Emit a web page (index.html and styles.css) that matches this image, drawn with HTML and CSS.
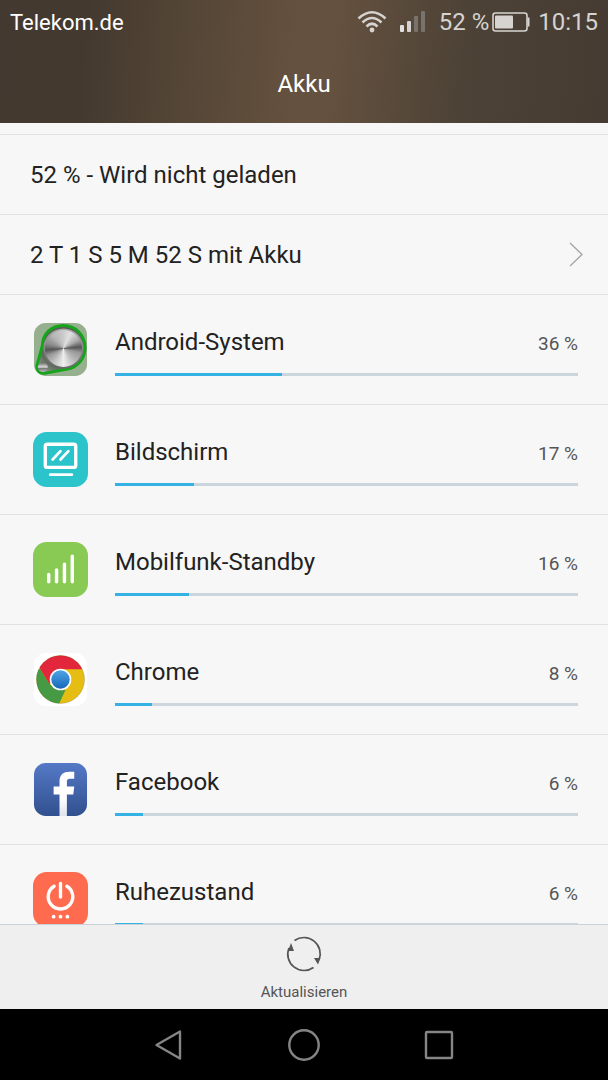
FILE: index.html
```html
<!DOCTYPE html>
<html lang="de">
<head>
  <meta charset="UTF-8">
  <meta name="viewport" content="width=device-width, initial-scale=1">
  <title>Akku</title>
  <link rel="stylesheet" href="styles.css">
</head>
<body>
  <header class="header">
    <div class="status-bar">
      <span class="carrier">Telekom.de</span>
      <svg class="wifi" width="30" height="24" viewBox="0 0 30 24" aria-hidden="true">
        <g fill="none" stroke="#d6d3d0" stroke-width="2.6">
          <path d="M1.5 8.5Q15-4 28.5 8.5"/>
          <path d="M5.5 12.5Q15 3.5 24.5 12.5"/>
          <path d="M9.5 16.5Q15 11 20.5 16.5"/>
        </g>
        <circle cx="15" cy="20" r="2.4" fill="#d6d3d0"/>
      </svg>
      <svg class="signal" width="25" height="22" viewBox="0 0 25 22" aria-hidden="true">
        <rect x="0" y="14" width="4" height="7" rx="1" fill="#e2e0de"/>
        <rect x="7" y="10" width="4" height="11" rx="1" fill="#d6d3d0"/>
        <rect x="14" y="5" width="4" height="16" rx="1" fill="#77736d"/>
        <rect x="21" y="0" width="4" height="21" rx="1" fill="#77736d"/>
      </svg>
      <span class="status-text">52 %</span>
      <svg class="battery" width="38" height="20" viewBox="0 0 38 20" aria-hidden="true">
        <rect x="1" y="1" width="34" height="18" rx="2.5" fill="none" stroke="#d6d3d0" stroke-width="1.6"/>
        <rect x="3" y="3.500" width="18" height="13" rx="1" fill="#d6d3d0"/>
        <path d="M36.5 5.500v9" stroke="#d6d3d0" stroke-width="2"/>
      </svg>
      <time class="status-text">10:15</time>
    </div>
    <h1 class="title">Akku</h1>
  </header>

  <main class="content">
    <div class="info-row">52 % - Wird nicht geladen</div>
    <a class="info-row" href="#verlauf">
      2 T 1 S 5 M 52 S mit Akku
      <svg width="14" height="26" viewBox="0 0 14 26" aria-hidden="true">
        <path d="M1 1l12 11.500-12 11.500" fill="none" stroke="#a3a3a3" stroke-width="1.3"/>
      </svg>
    </a>

    <!-- Verbrauch pro App -->
    <ul class="app-list">
      <li class="app">
        <span class="icon">
          <svg viewBox="0 0 56 56" aria-hidden="true">
            <defs>
              <radialGradient id="shade" cx="0.55" cy="0.45" r="0.6">
                <stop offset="0.6" stop-color="#4e544c"/>
                <stop offset="1" stop-color="#7d8f79"/>
              </radialGradient>
              <linearGradient id="rim" x1="0" y1="0" x2="0" y2="1">
                <stop offset="0" stop-color="#a8a8a8"/>
                <stop offset="1" stop-color="#666"/>
              </linearGradient>
              <linearGradient id="ball" x1="0" y1="0" x2="0" y2="1">
                <stop offset="0" stop-color="#666"/>
                <stop offset="0.5" stop-color="#ddd"/>
                <stop offset="0.6" stop-color="#777"/>
                <stop offset="1" stop-color="#bbb"/>
              </linearGradient>
            </defs>
            <rect x="1" y="1" width="54" height="54" rx="12" fill="#96b08f"/>
            <path d="M31 3.500C18 3.500 10 12 9.500 24L4 44C3 50 8 53 13 52L35 48C46 46 53 37 53 26C53 13 43 3.500 31 3.500Z" fill="url(#shade)" stroke="#15a51b" stroke-width="3"/>
            <circle cx="31" cy="27" r="20.5" fill="url(#rim)"/>
            <circle cx="10" cy="46" r="5" fill="url(#ball)"/>
          </svg>
          <span class="knob"></span>
        </span>
        <label class="app-name" for="app1">Android-System</label>
        <span class="percent">36 %</span>
        <progress id="app1" value="36" max="100"></progress>
      </li>
      <li class="app">
        <span class="icon">
          <svg viewBox="0 0 56 56" aria-hidden="true">
            <rect width="56" height="56" rx="14" fill="#2bc4cb"/>
            <rect x="12.5" y="12.5" width="31" height="23.5" rx="2" fill="none" stroke="#fff" stroke-width="3.4"/>
            <path d="M20 28l8-8.500M28 28l8-8.500M17.500 43.500h22" stroke="#fff" stroke-width="2.8" stroke-linecap="round"/>
          </svg>
        </span>
        <label class="app-name" for="app2">Bildschirm</label>
        <span class="percent">17 %</span>
        <progress id="app2" value="17" max="100"></progress>
      </li>
      <li class="app">
        <span class="icon">
          <svg viewBox="0 0 56 56" aria-hidden="true">
            <rect width="56" height="56" rx="14" fill="#89ca55"/>
            <path d="M16 33v7.500M24 28.500v12M32 22.500v18M40 14.500v26" stroke="#fff" stroke-width="3.5" stroke-linecap="round"/>
          </svg>
        </span>
        <label class="app-name" for="app3">Mobilfunk-Standby</label>
        <span class="percent">16 %</span>
        <progress id="app3" value="16" max="100"></progress>
      </li>
      <li class="app">
        <span class="icon">
          <svg viewBox="0 0 56 56" aria-hidden="true">
            <defs>
              <clipPath id="disc"><circle cx="28" cy="28" r="24.5"/></clipPath>
              <linearGradient id="blue" x1="0" y1="0" x2="0" y2="1">
                <stop offset="0" stop-color="#50a4e6"/>
                <stop offset="1" stop-color="#1768b8"/>
              </linearGradient>
            </defs>
            <rect x="1" y="1" width="54" height="54" rx="12" fill="#fff"/>
            <g clip-path="url(#disc)">
              <rect width="56" height="56" fill="#e5bd13"/>
              <path d="M0 17.500H7.500L17 33L33 39L25 56H0Z" fill="#459a43"/>
              <path d="M7.500 17.500L0 5V0H56V17.500H28L17 33Z" fill="#e2263b"/>
            </g>
            <circle cx="28" cy="28" r="24.5" fill="none" stroke="#00000022"/>
            <circle cx="28" cy="28" r="11" fill="#fff"/>
            <circle cx="28" cy="28" r="9.4" fill="url(#blue)"/>
          </svg>
        </span>
        <label class="app-name" for="app4">Chrome</label>
        <span class="percent">8 %</span>
        <progress id="app4" value="8" max="100"></progress>
      </li>
      <li class="app">
        <span class="icon">
          <svg viewBox="0 0 56 56" aria-hidden="true">
            <defs>
              <linearGradient id="fb" x1="0" y1="0" x2="0" y2="1">
                <stop offset="0" stop-color="#5579c6"/>
                <stop offset="1" stop-color="#31508f"/>
              </linearGradient>
              <linearGradient id="fbMark" x1="0" y1="0" x2="0" y2="1">
                <stop offset="0.6" stop-color="#fff"/>
                <stop offset="1" stop-color="#dde4ee"/>
              </linearGradient>
            </defs>
            <rect x="1" y="1" width="54" height="54" rx="12" fill="url(#fb)"/>
            <path d="M27 55V33H21V25H27V20C27 13 31 10 37 10H42V17H38C35 17 34.500 18.500 34.500 20.500V25H42L41 33H34.500V55Z" fill="url(#fbMark)"/>
          </svg>
        </span>
        <label class="app-name" for="app5">Facebook</label>
        <span class="percent">6 %</span>
        <progress id="app5" value="6" max="100"></progress>
      </li>
      <li class="app">
        <span class="icon">
          <svg viewBox="0 0 56 56" aria-hidden="true">
            <rect width="56" height="56" rx="14" fill="#ff6b4f"/>
            <path d="M21.500 14.500A12.500 12.500 0 1 0 34.500 14.500M28 11.500v14" fill="none" stroke="#fff" stroke-width="3.4" stroke-linecap="round"/>
            <g fill="#fff">
              <circle cx="21" cy="45.5" r="1.9"/>
              <circle cx="28" cy="45.5" r="1.9"/>
              <circle cx="35" cy="45.5" r="1.9"/>
            </g>
          </svg>
        </span>
        <label class="app-name" for="app6">Ruhezustand</label>
        <span class="percent">6 %</span>
        <progress id="app6" value="6" max="100"></progress>
      </li>
    </ul>
  </main>

  <div class="toolbar">
    <button class="refresh" type="button">
      <svg width="36" height="36" viewBox="0 0 36 36" aria-hidden="true">
        <path d="M8.500 4.500A16.300 16.300 0 0 1 33 24M27.500 31.500A16.300 16.300 0 0 1 3 12" fill="none" stroke="#555" stroke-width="1.7"/>
        <path d="M5 7L8 15H2ZM28 22H34.500L32 28.500Z" fill="#555"/>
      </svg>
      Aktualisieren
    </button>
  </div>

  <nav class="nav-bar">
    <button type="button" aria-label="Zurück">
      <svg width="32" height="32" viewBox="0 0 32 32"><path d="M3.500 16L27 2.500V29.500Z"/></svg>
    </button>
    <button type="button" aria-label="Startseite">
      <svg width="32" height="32" viewBox="0 0 32 32"><circle cx="16" cy="16" r="14.7"/></svg>
    </button>
    <button type="button" aria-label="Übersicht">
      <svg width="32" height="32" viewBox="0 0 32 32"><rect x="3" y="3" width="26" height="26" rx="1"/></svg>
    </button>
  </nav>
</body>
</html>
```
FILE: styles.css
```css
* {
  box-sizing: border-box;
}

body {
  margin: 0;
  height: 100vh;
  display: flex;
  flex-direction: column;
  font-family: Roboto, "Liberation Sans", sans-serif;
  font-size: 24px;
  color: #222;
  background-color: #f7f7f7;
}

button {
  padding: 0;
  border: none;
  background: none;
  font-family: inherit;
}

/* header */
.header {
  flex: none;
  color: #fff;
  background: linear-gradient(95deg, #433930 0%, #43392f 14%, #524435 28%, #65513f 49%, #65513f 54%, #4c4236 76%, #453b32 100%);
}

.status-bar {
  display: flex;
  align-items: center;
  height: 44px;
  padding: 0 10px;
}

.carrier {
  flex: 1;
  font-size: 22px;
}

.wifi {
  margin-right: 13px;
}

.signal {
  margin-right: 14px;
}

.battery {
  margin: 0 8px 0 3px;
}

.status-text {
  color: #d6d3d0;
}

.title {
  margin: 0;
  height: 79px;
  line-height: 80px;
  font-size: 24px;
  font-weight: normal;
  text-align: center;
}

/* content */
.content {
  flex: 1;
  min-height: 0;
  overflow: hidden;
  padding-top: 11px;
}

.info-row {
  display: flex;
  align-items: center;
  justify-content: space-between;
  height: 80px;
  padding: 0 25px 0 30px;
  border-top: 1px solid #e1e1e1;
  color: inherit;
  text-decoration: none;
}

.app-list {
  margin: 0;
  padding: 0;
  list-style: none;
}

.app {
  display: grid;
  grid-template-columns: 55px 1fr auto;
  grid-template-rows: 40px 3px;
  column-gap: 27px;
  row-gap: 11px;
  height: 110px;
  padding: 27px 30px 0 33px;
  border-top: 1px solid #e1e1e1;
}

.icon {
  position: relative;
  grid-row: 1 / 3;
  width: 55px;
  height: 55px;
}

.icon svg {
  display: block;
}

.knob {
  position: absolute;
  top: 8px;
  left: 12px;
  width: 37px;
  height: 37px;
  border-radius: 50%;
  background: conic-gradient(#ccc, #e0e0e0 25deg, #aaa 60deg, #555 85deg, #999 105deg, #bbb 140deg, #eee 180deg, #bbb 220deg, #999 245deg, #555 265deg, #888 285deg, #b5b5b5 320deg, #ccc);
}

.app-name {
  line-height: 40px;
}

.percent {
  font-size: 19px;
  line-height: 44px;
  color: #555;
}

progress {
  grid-column: 2 / 4;
  width: 100%;
  height: 3px;
  border: none;
  appearance: none;
}

progress::-webkit-progress-bar {
  background-color: #cbd6dc;
}

progress::-webkit-progress-value {
  background-color: #34b2e4;
}

/* bottom */
.toolbar {
  flex: none;
  display: flex;
  justify-content: center;
  height: 85px;
  border-top: 1px solid #cbd3d8;
  background-color: #efefef;
}

.refresh {
  display: flex;
  flex-direction: column;
  align-items: center;
  gap: 10px;
  padding-top: 11px;
  font-size: 15px;
  line-height: 20px;
  color: #555;
}

.nav-bar {
  flex: none;
  display: flex;
  justify-content: center;
  gap: 103px;
  height: 71px;
  background-color: #000;
}

.nav-bar svg {
  display: block;
  fill: none;
  stroke: #858585;
  stroke-width: 2.4;
  stroke-linejoin: round;
}
```
